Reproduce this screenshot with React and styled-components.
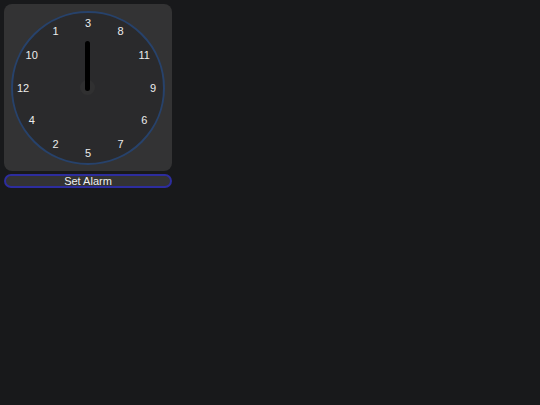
import React from 'react'
import styled, {createGlobalStyle} from "styled-components";

const GlobalStyle = createGlobalStyle`
  html, body {
    margin: 0;
    background: #18191b;
    font-family: "Liberation Sans", Arial, sans-serif;
  }
`

const Wrapper = styled.div`
  display: flex;
  flex-direction: column;
  gap: 3px;
  width: 168px;
  padding: 4px;
`

const Panel = styled.div`
  display: flex;
  align-items: center;
  justify-content: center;
  height: 167px;
  background: #333334;
  border-radius: 8px;
`

const Face = styled.div`
  position: relative;
  width: 150px;
  height: 150px;
  border-radius: 50%;
  border: 2px solid #27426b;
  background: #2a2a2c;
`

const Numeral = styled.span`
  position: absolute;
  transform: translate(-50%, -50%);
  color: #ececec;
  font-size: 11px;
  line-height: 1;
`

const Hand = styled.div`
  position: absolute;
  left: 72px;
  top: 28px;
  width: 5px;
  height: 50px;
  border-radius: 3px;
  background: #000;
  z-index: 1;
`

const Pivot = styled.div`
  position: absolute;
  left: 67px;
  top: 67px;
  width: 15px;
  height: 15px;
  border-radius: 50%;
  background: #303031;
`

const AlarmButton = styled.button`
  height: 14px;
  padding: 0;
  border: 2px solid #2d2d9e;
  border-radius: 8px;
  background: #333334;
  color: #f0f0f0;
  font-family: "Liberation Sans", Arial, sans-serif;
  font-size: 11px;
  line-height: 10px;
`

// numbers going clockwise from the top
const numbers = [3, 8, 11, 9, 6, 7, 5, 2, 4, 12, 10, 1]

const Clock = () => {
  return (
    <Face>
      {numbers.map((n, i) => {
        let angle = (i * 30) * Math.PI / 180
        let x = 75 + Math.sin(angle) * 65
        let y = 75 - Math.cos(angle) * 65
        return <Numeral key={n} style={{left: x, top: y}}>{n}</Numeral>
      })}
      <Pivot />
      <Hand />
    </Face>
  )
}

export default function App() {
  return (
    <Wrapper>
      <GlobalStyle />
      <Panel>
        <Clock />
      </Panel>
      <AlarmButton type="button">Set Alarm</AlarmButton>
    </Wrapper>
  )
}
